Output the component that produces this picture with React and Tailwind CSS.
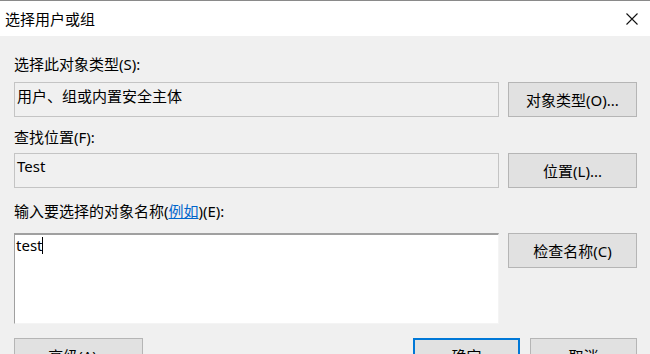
export default function App() {
  const font = { fontFamily: '"Noto Sans", "Noto Sans CJK SC", sans-serif' }
  return (
    <div
      className="w-[650px] h-[354px] overflow-hidden bg-[#f0f0f0] text-[15px] leading-[20px] text-black"
      style={font}
    >
      <div className="h-[36px] bg-white border-t border-[#8a8a8a] flex items-center justify-between pl-[5px] pr-[12px]">
        <span className="text-[15px]">选择用户或组</span>
        <svg width="12" height="12" viewBox="0 0 12 12" className="mt-[1px]">
          <path d="M0.5 0.5 L11.5 11.5 M11.5 0.5 L0.5 11.5" stroke="#111" strokeWidth="1.1" fill="none" />
        </svg>
      </div>

      <div className="pl-[14px] pr-[13px]">
        <div className="mt-[18px]">选择此对象类型(S):</div>
        <div className="mt-[8px] grid grid-cols-[485px_129px] gap-x-[9px]">
          <div className="h-[35px] border border-[#c4c4c4] bg-[#f0f0f0] px-[2px] pt-[3px]">用户、组或内置安全主体</div>
          <button className="h-[35px] border border-[#b5b5b5] bg-[#e1e1e1] flex items-center justify-center">对象类型(O)...</button>
        </div>

        <div className="mt-[10px]">查找位置(F):</div>
        <div className="mt-[6px] grid grid-cols-[485px_129px] gap-x-[9px]">
          <div className="h-[35px] border border-[#c4c4c4] bg-[#f0f0f0] px-[2px] pt-[2px]">Test</div>
          <button className="h-[35px] border border-[#b5b5b5] bg-[#e1e1e1] flex items-center justify-center">位置(L)...</button>
        </div>

        <div className="mt-[13px]">
          输入要选择的对象名称(<span className="text-[#0066cc] underline">例如</span>)(E):
        </div>
        <div className="mt-[12px] grid grid-cols-[485px_129px] gap-x-[9px] items-start">
          <div className="h-[91px] bg-white border-t-2 border-l border-t-[#a0a0a0] border-l-[#a0a0a0] border-r border-b border-r-[#f4f4f4] border-b-[#f4f4f4] px-[1px]">
            <span>test</span>
            <span className="inline-block w-px h-[17px] bg-black align-[-3px]"></span>
          </div>
          <button className="h-[35px] border border-[#b5b5b5] bg-[#e1e1e1] flex items-center justify-center">检查名称(C)</button>
        </div>

        <div className="mt-[14px] flex">
          <button className="w-[129px] h-[35px] border border-[#b5b5b5] bg-[#e1e1e1] flex items-center justify-center">高级(A)...</button>
          <div className="flex-1"></div>
          <button className="w-[107px] h-[35px] border-2 border-[#0078d7] bg-[#e1e1e1] flex items-center justify-center">确定</button>
          <button className="ml-[10px] w-[107px] h-[35px] border border-[#b5b5b5] bg-[#e1e1e1] flex items-center justify-center">取消</button>
        </div>
      </div>
    </div>
  )
}
